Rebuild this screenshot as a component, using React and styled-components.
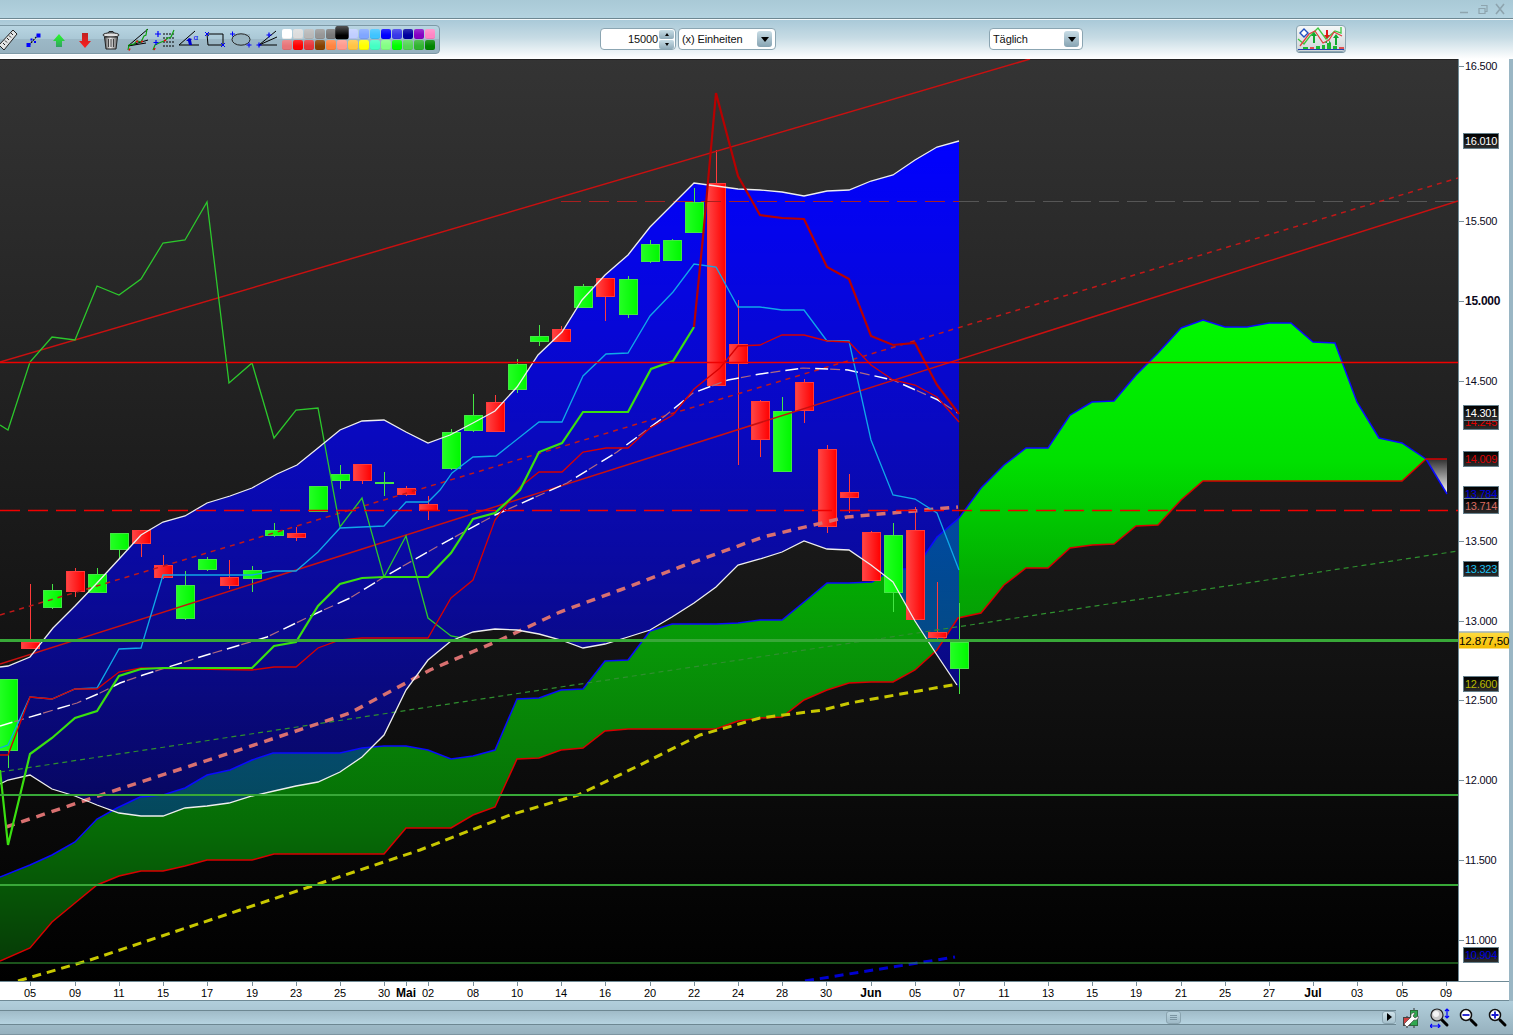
import React from "react";
import styled, { createGlobalStyle } from "styled-components";

const GlobalStyle = createGlobalStyle`
  html, body { margin: 0; padding: 0; background: #fff; }
  body { font-family: "Liberation Sans", Arial, sans-serif; overflow: hidden; }
`;

// chart coordinates are page pixels, the svg viewBox starts at the plot's top edge
const PLOT_TOP = 59;
const priceY = (p) => 301 + (15000 - p) * 0.15975;

const candles = [
  [8, 679, 750, 679, 768, "g"], [30, 642, 648, 584, 648, "r"], [52, 590, 607, 584, 609, "g"],
  [75, 571, 591, 568, 597, "r"], [97, 574, 592, 568, 593, "g"], [119, 533, 549, 533, 558, "g"],
  [141, 530, 543, 530, 557, "r"], [163, 565, 577, 555, 579, "r"], [185, 585, 618, 571, 620, "g"],
  [207, 559, 569, 557, 571, "g"], [229, 577, 585, 560, 589, "r"], [252, 570, 578, 566, 592, "g"],
  [274, 530, 535, 523, 537, "g"], [296, 533, 537, 527, 541, "r"], [318, 486, 511, 486, 511, "g"],
  [340, 474, 480, 465, 489, "g"], [362, 464, 480, 464, 484, "r"], [384, 482, 483, 472, 496, "g"],
  [406, 488, 494, 486, 496, "r"], [428, 504, 510, 496, 520, "r"], [451, 432, 468, 429, 470, "g"],
  [473, 415, 430, 394, 432, "g"], [495, 402, 431, 395, 431, "r"], [517, 364, 389, 359, 393, "g"],
  [539, 336, 341, 325, 346, "g"], [561, 329, 341, 326, 341, "r"], [583, 286, 307, 284, 308, "g"],
  [605, 278, 296, 278, 321, "r"], [628, 279, 314, 276, 318, "g"], [650, 244, 261, 240, 263, "g"],
  [672, 240, 260, 239, 260, "g"], [694, 202, 232, 188, 233, "g"], [716, 183, 385, 150, 385, "r"],
  [738, 344, 363, 300, 465, "r"], [760, 401, 439, 400, 457, "r"], [782, 411, 471, 397, 471, "g"],
  [804, 382, 410, 379, 423, "r"], [827, 449, 526, 445, 533, "r"], [849, 492, 497, 474, 513, "r"],
  [871, 532, 580, 531, 580, "r"], [893, 535, 592, 523, 612, "g"], [915, 530, 619, 507, 619, "r"],
  [937, 632, 637, 582, 642, "r"], [959, 642, 668, 603, 694, "g"],
];

const bandUpper = [
  [0, 667], [8, 666], [30, 657], [53, 628], [75, 606], [97, 583], [120, 558], [141, 535], [163, 522],
  [185, 516], [207, 503], [230, 496], [252, 488], [277, 474], [297, 465], [318, 448], [340, 430],
  [362, 421], [384, 420], [406, 432], [428, 443], [450, 435], [473, 423], [495, 411], [517, 387],
  [538, 355], [562, 332], [582, 300], [605, 275], [628, 255], [650, 227], [672, 205], [694, 183],
  [716, 186], [738, 189], [760, 190], [782, 192], [804, 196], [827, 191], [849, 190], [871, 181],
  [893, 175], [915, 160], [937, 147], [959, 141],
];
const bandLower = [
  [0, 784], [8, 780], [30, 775], [52, 789], [75, 796], [97, 805], [119, 813], [141, 816], [163, 816],
  [185, 808], [207, 806], [229, 803], [252, 796], [274, 791], [296, 786], [318, 782], [340, 772],
  [362, 757], [384, 735], [406, 690], [428, 660], [451, 641], [473, 632], [495, 629], [517, 630],
  [539, 634], [561, 640], [583, 648], [605, 644], [628, 637], [650, 630], [672, 617], [694, 603],
  [716, 587], [738, 565], [760, 559], [782, 552], [804, 541], [827, 549], [849, 550], [871, 565],
  [893, 582], [915, 621], [937, 655], [959, 688],
];
const cloudUpper = [
  [0, 877], [30, 865], [52, 855], [75, 842], [97, 819], [117, 808], [140, 797], [163, 795], [185, 788],
  [207, 775], [230, 770], [252, 760], [273, 753], [296, 753], [318, 753], [340, 753], [362, 748],
  [384, 746], [406, 746], [428, 750], [451, 759], [473, 756], [495, 750], [517, 699], [539, 698],
  [561, 690], [583, 689], [605, 661], [628, 660], [650, 631], [672, 624], [694, 624], [716, 624],
  [738, 623], [760, 620], [782, 620], [804, 602], [827, 583], [849, 583], [872, 582], [893, 569],
  [915, 569], [937, 537], [959, 518], [981, 488], [1004, 465], [1026, 448], [1048, 448], [1070, 415],
  [1092, 402], [1114, 401], [1136, 375], [1158, 353], [1181, 328], [1203, 320], [1225, 327], [1247, 327],
  [1269, 323], [1291, 323], [1313, 342], [1335, 343], [1357, 402], [1379, 438], [1402, 443], [1426, 459],
];
const cloudLower = [
  [0, 961], [30, 948], [52, 922], [75, 903], [97, 885], [119, 876], [141, 871], [163, 871], [185, 866],
  [207, 860], [229, 860], [252, 860], [274, 854], [296, 854], [318, 854], [340, 854], [362, 854],
  [384, 854], [406, 828], [428, 828], [451, 828], [473, 815], [495, 807], [517, 759], [539, 758],
  [561, 750], [583, 748], [605, 731], [628, 729], [650, 729], [672, 729], [694, 729], [716, 729],
  [738, 721], [760, 718], [782, 717], [804, 700], [827, 690], [849, 683], [871, 682], [893, 682],
  [915, 670], [937, 650], [958, 618], [981, 613], [1004, 585], [1026, 568], [1048, 568], [1070, 548],
  [1092, 545], [1114, 544], [1136, 526], [1158, 525], [1181, 500], [1203, 481], [1225, 481], [1402, 481],
  [1426, 459],
];
const lagging = [
  [0, 425], [8, 430], [30, 362], [52, 337], [75, 340], [97, 286], [119, 295], [141, 279], [163, 243],
  [185, 240], [207, 202], [229, 383], [252, 363], [274, 438], [296, 410], [318, 408], [340, 527],
  [362, 498], [384, 577], [406, 536], [428, 618], [451, 636], [473, 640],
];
const thickGreen = [
  [0, 770], [8, 845], [30, 754], [52, 738], [75, 718], [97, 711], [119, 676], [141, 669], [163, 668],
  [252, 668], [274, 646], [296, 642], [318, 606], [340, 584], [362, 578], [384, 577], [428, 577],
  [451, 553], [473, 519], [495, 513], [520, 490], [539, 452], [562, 443], [583, 412], [628, 412],
  [651, 369], [673, 361], [694, 327],
];
const thickRed = [
  [694, 327], [703, 237], [716, 93], [738, 176], [760, 215], [782, 218], [804, 219], [827, 267],
  [849, 279], [871, 336], [893, 345], [915, 343], [937, 385], [959, 414],
];
const thinRed = [
  [0, 755], [8, 755], [30, 697], [52, 699], [75, 689], [97, 689], [119, 672], [141, 668], [252, 670],
  [274, 667], [296, 667], [318, 648], [340, 640], [362, 638], [428, 638], [451, 598], [473, 580],
  [495, 520], [520, 487], [539, 472], [562, 472], [583, 452], [606, 448], [628, 448], [650, 428],
  [673, 415], [694, 389], [720, 368], [738, 346], [760, 345], [782, 335], [804, 335], [827, 341],
  [849, 342], [871, 365], [893, 380], [915, 385], [937, 397], [959, 422],
];
const cyan = [
  [0, 748], [8, 745], [30, 697], [52, 699], [75, 689], [97, 688], [119, 649], [141, 648], [163, 575],
  [252, 575], [274, 571], [296, 571], [318, 552], [340, 528], [362, 527], [384, 526], [406, 502],
  [428, 502], [440, 490], [452, 473], [473, 457], [496, 456], [539, 422], [562, 422], [583, 376],
  [606, 354], [628, 353], [650, 316], [673, 292], [694, 264], [716, 267], [738, 307], [760, 307],
  [782, 310], [804, 310], [827, 341], [849, 341], [871, 440], [893, 495], [915, 499], [937, 513],
  [959, 570],
];
const whiteDash = [
  [0, 726], [20, 720], [77, 703], [100, 693], [120, 683], [143, 675], [200, 657], [267, 637], [317, 613],
  [350, 598], [384, 577], [440, 545], [495, 515], [567, 483], [617, 452], [660, 420], [693, 393],
  [728, 380], [760, 374], [803, 368], [848, 370], [893, 380], [938, 400], [958, 413],
];
const pinkDash = [
  [6, 827], [110, 792], [233, 752], [350, 713], [430, 670], [500, 640], [560, 612], [620, 590],
  [680, 567], [763, 537], [847, 517], [958, 507],
];
const yellowDash = [
  [18, 981], [90, 960], [330, 880], [420, 850], [510, 815], [578, 795], [640, 765], [700, 735],
  [760, 718], [823, 710], [850, 703], [958, 684],
];

const pts = (list) => list.map((p) => p.join(",")).join(" ");

const yLabels = [
  { y: 66, t: "16.500" }, { y: priceY(15500), t: "15.500" }, { y: priceY(15000), t: "15.000", bold: true },
  { y: priceY(14500), t: "14.500" }, { y: priceY(13500), t: "13.500" }, { y: priceY(13000), t: "13.000" },
  { y: priceY(12500), t: "12.500" }, { y: priceY(12000), t: "12.000" }, { y: priceY(11500), t: "11.500" },
  { y: priceY(11000), t: "11.000" },
];
const valueTags = [
  { y: 141, t: "16.010", c: "#ffffff" }, { y: 422, t: "14.245", c: "#e00000" },
  { y: 413, t: "14.301", c: "#ffffff" }, { y: 459, t: "14.009", c: "#d80000" },
  { y: 494, t: "13.784", c: "#0000e0" }, { y: 506, t: "13.714", c: "#d86a60" },
  { y: 569, t: "13.323", c: "#1cc0f0" }, { y: 684, t: "12.600", c: "#b8b800" },
  { y: 955, t: "10.904", c: "#0000e0" },
];
const xLabels = [
  [30, "05"], [75, "09"], [119, "11"], [163, "15"], [207, "17"], [252, "19"], [296, "23"], [340, "25"],
  [384, "30"], [406, "Mai", 1], [428, "02"], [473, "08"], [517, "10"], [561, "14"], [605, "16"],
  [650, "20"], [694, "22"], [738, "24"], [782, "28"], [826, "30"], [871, "Jun", 1], [915, "05"],
  [959, "07"], [1004, "11"], [1048, "13"], [1092, "15"], [1136, "19"], [1181, "21"], [1225, "25"],
  [1269, "27"], [1313, "Jul", 1], [1357, "03"], [1402, "05"], [1446, "09"],
];
const swatches = [
  "#ffffff", "#dcdcdc", "#b8b8b8", "#969696", "#787878", "#000000", "#c0ceff", "#80a6ff", "#40c4ff",
  "#0000ff", "#3838e8", "#0000a0", "#8400c4", "#ff84c4",
  "#e87478", "#ff0000", "#e83438", "#844000", "#ff8440", "#ff9a8e", "#ffc444", "#ffff00", "#44ffc4",
  "#84ff84", "#00ff00", "#54d454", "#30b430", "#008400",
];

const Page = styled.div`
  width: 1513px;
  height: 1035px;
  display: flex;
  flex-direction: column;
  overflow: hidden;
`;

const TitleBar = styled.div`
  height: 18px;
  border-bottom: 1px solid #6d8792;
  background: linear-gradient(#a9c9d6, #b4d3e0);
  display: flex;
  justify-content: flex-end;
  align-items: center;
  padding-right: 5px;
`;

const Toolbar = styled.div`
  height: 39px;
  border-top: 1px solid #f4f9fb;
  background: linear-gradient(#a9c9d8 0%, #c6dbe4 45%, #ffffff 100%);
  display: flex;
  align-items: flex-start;
`;

const ToolPanel = styled.div`
  width: 448px;
  height: 29px;
  margin: 5px 0 0 -8px;
  padding-left: 1px;
  box-sizing: border-box;
  display: flex;
  align-items: center;
  border: 1px solid #7d99a6;
  border-radius: 4px;
  box-shadow: 0 1px 0 #ffffff;
  background: linear-gradient(#b8d5e2 0%, #a9c7d5 50%, #9cb8c6 50%, #96b1bf 100%);
  overflow: hidden;
  flex-shrink: 0;
`;

const ToolIcon = styled.svg`
  width: 26px;
  height: 26px;
  flex-shrink: 0;
  display: block;
`;

const Palette = styled.div`
  display: grid;
  grid-template-columns: repeat(14, 10px);
  grid-auto-rows: 10px;
  gap: 1px;
  margin-left: 2px;
`;

const Swatch = styled.span`
  border-radius: 2px;
  background-color: ${(p) => p.$color};
  background-image: linear-gradient(rgba(255, 255, 255, 0.18), rgba(255, 255, 255, 0) 60%);
  box-shadow: inset 0 -1px 0 rgba(0, 0, 0, 0.08);
  ${(p) => p.$selected && `
    transform: scale(1.35) translateY(-1px);
    border-radius: 2px;
    background-image: linear-gradient(#555, #000 70%);
    position: relative;
    z-index: 1;
  `}
`;

const FieldBox = styled.div`
  width: ${(p) => p.$width}px;
  height: 22px;
  margin: 8px 0 0 ${(p) => p.$left}px;
  box-sizing: border-box;
  flex-shrink: 0;
  display: flex;
  align-items: center;
  background: #fff;
  border: 1px solid #8ba5b2;
  border-radius: 4px;
  font-size: 11px;
  color: #111;
  letter-spacing: -0.1px;
`;

const FieldText = styled.span`
  flex: 1;
  padding: ${(p) => (p.$right ? "0 1px 0 3px" : "0 3px")};
  text-align: ${(p) => (p.$right ? "right" : "left")};
  white-space: nowrap;
`;

const ArrowButton = styled.span`
  width: 15px;
  height: 16px;
  margin-right: 3px;
  border-radius: 3px;
  background: linear-gradient(#c9dde6, #86a3b2);
  display: flex;
  align-items: center;
  justify-content: center;
  &::after {
    content: "";
    border-left: 4px solid transparent;
    border-right: 4px solid transparent;
    border-top: 5px solid #000;
  }
`;

const Spinner = styled.span`
  width: 15px;
  height: 19px;
  margin-right: 1px;
  display: flex;
  flex-direction: column;
  gap: 1px;
`;

const SpinPart = styled.span`
  flex: 1;
  border-radius: 2px;
  background: linear-gradient(#c9dde6, #8fabb9);
  display: flex;
  align-items: center;
  justify-content: center;
  &::after {
    content: "";
    border-left: 2.5px solid transparent;
    border-right: 2.5px solid transparent;
    ${(p) => (p.$up ? "border-bottom: 3px solid #000;" : "border-top: 3px solid #000;")}
  }
`;

const ChartButton = styled.div`
  width: 50px;
  height: 27px;
  margin: 5px 0 0 213px;
  box-sizing: border-box;
  flex-shrink: 0;
  border: 1px solid #8ba5b2;
  border-radius: 4px;
  background: linear-gradient(#f4f7f8, #d0d6d8);
  box-shadow: 0 1px 0 #74909d;
  overflow: hidden;
`;

const ChartRow = styled.div`
  height: 922px;
  display: flex;
`;

const Plot = styled.div`
  width: 1458px;
  height: 922px;
  flex-shrink: 0;
  background: linear-gradient(#343434, #000000);
  box-shadow: inset 0 1px 0 #222;
`;

const PlotSvg = styled.svg`
  display: block;
`;

const YAxis = styled.div`
  position: relative;
  width: 50px;
  flex-shrink: 0;
  background: #fff;
  border-left: 1px solid #6f8a96;
`;

const EdgeStrip = styled.div`
  width: 4px;
  flex-shrink: 0;
  background: #9ab6c4;
`;

const YTick = styled.div`
  position: absolute;
  left: 0;
  width: 5px;
  height: 1px;
  background: #7a8f99;
`;

const YLabel = styled.span`
  position: absolute;
  left: 6px;
  transform: translateY(-50%);
  font-size: ${(p) => (p.$bold ? 12 : 11)}px;
  line-height: 13px;
  letter-spacing: -0.25px;
  color: #0c0820;
  font-weight: ${(p) => (p.$bold ? 700 : 400)};
  white-space: nowrap;
`;

const ValueTag = styled.span`
  position: absolute;
  left: 4px;
  width: 36px;
  height: 16px;
  box-sizing: border-box;
  transform: translateY(-50%);
  border: 1px solid #66808c;
  background: linear-gradient(#000, #2c2c2c);
  color: ${(p) => p.$color};
  font-size: 11px;
  line-height: 14px;
  letter-spacing: -0.25px;
  text-align: center;
  white-space: nowrap;
  overflow: hidden;
`;

const PriceTag = styled.span`
  position: absolute;
  left: 0;
  width: 50px;
  height: 16px;
  transform: translateY(-50%);
  background: linear-gradient(#ffdc40, #f4bc00);
  border-top: 1px solid #6f8a96;
  font-size: 11.5px;
  line-height: 16px;
  text-align: center;
  letter-spacing: -0.1px;
  color: #000;
  white-space: nowrap;
`;

const XRow = styled.div`
  height: 20px;
  display: flex;
`;

const XAxis = styled.div`
  position: relative;
  width: 1509px;
  flex-shrink: 0;
  box-sizing: border-box;
  background: #fff;
  border-top: 1px solid #6f8a96;
  border-bottom: 1px solid #6f8a96;
`;

const XTick = styled.div`
  position: absolute;
  top: 0;
  width: 1px;
  height: 4px;
  background: #7a8f99;
`;

const XLabel = styled.span`
  position: absolute;
  top: 4px;
  transform: translateX(-50%);
  font-size: ${(p) => (p.$bold ? 12 : 11)}px;
  font-weight: ${(p) => (p.$bold ? 700 : 400)};
  line-height: 14px;
  color: #000;
  white-space: nowrap;
`;

const BottomBar = styled.div`
  height: 34px;
  box-sizing: border-box;
  border-bottom: 1px solid #7d95a1;
  background: linear-gradient(#b2cfdc, #96b1be);
  display: flex;
  align-items: center;
`;

const ScrollTrack = styled.div`
  width: 1396px;
  height: 15px;
  margin-top: -1px;
  box-sizing: border-box;
  flex-shrink: 0;
  border-top: 1px solid #6d8792;
  border-bottom: 1px solid #6d8792;
  background: linear-gradient(#a0bbc8, #b6d3e0);
  display: flex;
  align-items: center;
  justify-content: flex-end;
`;

const ScrollThumb = styled.span`
  width: 15px;
  height: 13px;
  margin-right: 201px;
  box-sizing: border-box;
  border: 1px solid #8aa4b0;
  border-radius: 3px;
  background: linear-gradient(#b9d3de, #9fbac7);
  display: flex;
  flex-direction: column;
  align-items: center;
  justify-content: center;
  gap: 1px;
`;

const ThumbGrip = styled.i`
  width: 7px;
  height: 1px;
  background: #7b95a2;
`;

const ScrollButton = styled.span`
  width: 14px;
  height: 13px;
  box-sizing: border-box;
  border: 1px solid #8aa4b0;
  border-radius: 3px;
  background: linear-gradient(#cfe2ea, #a5c0cc);
  display: flex;
  align-items: center;
  justify-content: center;
  &::after {
    content: "";
    border-top: 4px solid transparent;
    border-bottom: 4px solid transparent;
    border-left: 5px solid #000;
  }
`;

const BottomIcons = styled.div`
  display: flex;
  align-items: center;
  margin-left: 5px;
  gap: 7px;
`;

const BottomIcon = styled.svg`
  width: 22px;
  height: 20px;
  flex-shrink: 0;
  display: block;
`;

function WindowControls() {
  return (
    <svg width="48" height="14" viewBox="0 0 48 14">
      <path d="M0 10.5h8" stroke="#8ea4ae" strokeWidth="1.5" />
      <path d="M21 3.5h6v6h-2M19 6.5h6v5h-6z" fill="none" stroke="#8ea4ae" strokeWidth="1.2" />
      <path d="M36 2l8 10M44 2l-8 10" stroke="#8ea4ae" strokeWidth="1.6" />
    </svg>
  );
}

function Candle({ x, top, bottom, high, low, kind }) {
  const stroke = kind === "g" ? "#44e644" : "#ff3a3a";
  const fill = kind === "g" ? "url(#candleGreen)" : "url(#candleRed)";
  return (
    <g>
      <line x1={x + 0.5} x2={x + 0.5} y1={high} y2={low} stroke={stroke} strokeWidth="1" />
      <rect x={x - 8.5} y={top + 0.5} width="18" height={Math.max(bottom - top, 1)} fill={fill} stroke={stroke} strokeWidth="1" />
    </g>
  );
}

function ToolIcons() {
  return (
    <>
      <ToolIcon viewBox="0 0 26 26">
        <path d="M19 3l4 4-13 16-5-5z" fill="#e2e4e4" stroke="#222" strokeWidth="1" />
        <path d="M17 6l2 2M15 8.500l2 2M13 11l2 2M11 13.500l2 2M9 16l2 2" stroke="#222" strokeWidth="1" />
      </ToolIcon>
      <ToolIcon viewBox="0 0 26 26">
        <path d="M9 18l9-10" stroke="#000" strokeWidth="1.2" strokeDasharray="2 1" />
        <path d="M6.500 16h4v4h-4zM16.500 6.500h4v4h-4zM10.500 11.500h2v2h-2zM14 14h2v2h-2z" fill="#0000ff" />
      </ToolIcon>
      <ToolIcon viewBox="0 0 26 26">
        <defs>
          <linearGradient id="arrowUp" x1="0" x2="0" y1="0" y2="1">
            <stop offset="0" stopColor="#28ff28" />
            <stop offset="1" stopColor="#30a060" />
          </linearGradient>
          <linearGradient id="arrowDown" x1="0" x2="0" y1="0" y2="1">
            <stop offset="0" stopColor="#c02020" />
            <stop offset="1" stopColor="#ff2020" />
          </linearGradient>
          <linearGradient id="canBody" x1="0" x2="1" y1="0" y2="0">
            <stop offset="0" stopColor="#555" />
            <stop offset="0.45" stopColor="#e8e8e8" />
            <stop offset="1" stopColor="#666" />
          </linearGradient>
        </defs>
        <path d="M13 7l6 7h-3v6h-6v-6H7z" fill="url(#arrowUp)" />
      </ToolIcon>
      <ToolIcon viewBox="0 0 26 26">
        <path d="M10 6h6v8h3l-6 7-6-7h3z" fill="url(#arrowDown)" />
      </ToolIcon>
      <ToolIcon viewBox="0 0 26 26">
        <ellipse cx="13" cy="8" rx="8" ry="2.200" fill="#e0e0e0" stroke="#222" />
        <path d="M10 6l1-1.500h4l1 1.500" fill="none" stroke="#222" />
        <path d="M6.500 10h13l-1.500 12H8z" fill="url(#canBody)" stroke="#222" />
        <path d="M10.500 12v8M13 12v8M15.500 12v8" stroke="#333" strokeWidth="0.9" />
      </ToolIcon>
      <ToolIcon viewBox="0 0 26 26">
        <path d="M4 19L24 2M4 19l20-6M4 19l18-3" stroke="#000" strokeWidth="1" fill="none" />
        <path d="M4 23l1-5 5-1 3-3 4 1 3-6 2-1 1-6" stroke="#10a010" strokeWidth="1.2" fill="none" />
        <path d="M5 23.500l1-2M12 15l2-1M17 15l2-1" stroke="#e01010" strokeWidth="1.6" />
      </ToolIcon>
      <ToolIcon viewBox="0 0 26 26">
        <path d="M13 7h12M13 11h12M13 15h12M13 19h12" stroke="#000" strokeWidth="1" strokeDasharray="2 1" />
        <path d="M3 23l2-5 4-2 5-2 4-3 3-1 3-7" stroke="#10a010" strokeWidth="1.2" fill="none" />
        <path d="M4 23l1-2M14 14l2-1" stroke="#e01010" strokeWidth="1.6" />
        <path d="M8 4v6M5 7h6M6 13v5M3.500 15.500h5" stroke="#0000ff" strokeWidth="1.2" />
      </ToolIcon>
      <ToolIcon viewBox="0 0 26 26">
        <path d="M3 18L19 4M3 18h20" stroke="#000" strokeWidth="1" fill="none" />
        <path d="M10 14l3-3 3 1-1 1 1 5h-3l-1-4z" fill="#0000d0" />
        <text x="17.500" y="13" fontSize="8" fill="#0000ff" fontFamily="Liberation Sans">α</text>
      </ToolIcon>
      <ToolIcon viewBox="0 0 26 26">
        <path d="M5 7h16v11H6z" fill="none" stroke="#000" strokeWidth="1" />
        <path d="M3 5l4 4M7 5L3 9M19 16l4 4M23 16l-4 4" stroke="#0000ff" strokeWidth="1" />
      </ToolIcon>
      <ToolIcon viewBox="0 0 26 26">
        <rect x="5" y="7" width="17" height="12" fill="#98b3bf" />
        <ellipse cx="13" cy="12.500" rx="9" ry="5.700" fill="none" stroke="#222" strokeWidth="1" />
        <path d="M4.500 4.500v5M2 7h5M21 15.500v5M18.500 18h5" stroke="#0000ff" strokeWidth="1" />
      </ToolIcon>
      <ToolIcon viewBox="0 0 26 26">
        <path d="M5 18L22 4M5 18l18-8M5 18h18" stroke="#000" strokeWidth="1" fill="none" />
        <path d="M5 15.500v5M2.500 18h5M15 5.500v5M12.500 8h5" stroke="#0000ff" strokeWidth="1.200" />
      </ToolIcon>
    </>
  );
}

function IndicatorGlyph() {
  return (
    <svg width="48" height="25" viewBox="0 0 48 25">
      <path d="M1 13l6 5 6-8 8-8 8 11 9-8 6 2v-6" fill="none" stroke="#3cc83c" strokeWidth="1.3" />
      <path d="M3 20L12 8l6-3 8 12 6-3 5-8 8 4" fill="none" stroke="#e04040" strokeWidth="1.3" />
      <path d="M3 7l4-4 4 4-4 4z" fill="#fff" stroke="#1f4fc0" strokeWidth="1.4" />
      <path d="M14 10h6l-3-4zM16 10h2v7h-2zM28 17h6l-3-4zM30 14h2v5h-2zM42 12h-6l3-4zM38 11h2v8h-2z" fill="#10a830" />
      <path d="M27 9h6l-3 4zM29 4h2v5h-2z" fill="#e01818" />
      <path d="M6 21h5v2H6zM13 21h4v2h-4zM19 20h4v3h-4zM25 19h3v4h-3zM30 17h4v6h-4zM36 20h4v3h-4z" fill="#18b830" />
      <path d="M42 21h5v2h-5zM13 21h4v2h-4z" fill="#e05050" />
      <path d="M1 23.500h46" stroke="#2040b0" strokeWidth="1" />
    </svg>
  );
}

function Magnifier({ children }) {
  return (
    <>
      <path d="M12 12l5 5" stroke="#000" strokeWidth="3" strokeLinecap="round" />
      <circle cx="7" cy="7" r="5.500" fill="#fff" stroke="#111" strokeWidth="1.500" />
      {children}
    </>
  );
}

function ChartPlot() {
  return (
    <PlotSvg width="1458" height="922" viewBox={`0 ${PLOT_TOP} 1458 922`}>
      <defs>
        <linearGradient id="bandFill" gradientUnits="userSpaceOnUse" x1="0" x2="0" y1="140" y2="860">
          <stop offset="0" stopColor="#0000ff" stopOpacity="1" />
          <stop offset="1" stopColor="#0000ff" stopOpacity="0.3" />
        </linearGradient>
        <linearGradient id="cloudFill" gradientUnits="userSpaceOnUse" x1="0" x2="0" y1="320" y2="960">
          <stop offset="0" stopColor="#00f800" />
          <stop offset="0.22" stopColor="#00e000" />
          <stop offset="0.41" stopColor="#02aa02" />
          <stop offset="0.5" stopColor="#089808" />
          <stop offset="0.8" stopColor="#066a06" />
          <stop offset="1" stopColor="#063c06" />
        </linearGradient>
        <linearGradient id="wedgeFill" gradientUnits="userSpaceOnUse" x1="0" x2="0" y1="459" y2="494">
          <stop offset="0" stopColor="#303030" />
          <stop offset="1" stopColor="#ffffff" />
        </linearGradient>
        <linearGradient id="candleRed" x1="0" x2="1" y1="0" y2="0">
          <stop offset="0" stopColor="#ff4646" />
          <stop offset="1" stopColor="#ff0000" />
        </linearGradient>
        <linearGradient id="candleGreen" x1="0" x2="1" y1="0" y2="0">
          <stop offset="0" stopColor="#24ff24" />
          <stop offset="1" stopColor="#00f800" />
        </linearGradient>
      </defs>

      <polygon points={pts([...cloudUpper, ...[...cloudLower].reverse()])} fill="url(#cloudFill)" />
      <polygon points="1426,459 1447,459 1447,494" fill="url(#wedgeFill)" />
      <polygon points={pts([...bandUpper, ...[...bandLower].reverse()])} fill="url(#bandFill)" />

      <polyline points={pts(cloudUpper)} fill="none" stroke="#0a0aff" strokeWidth="1.5" />
      <polyline points="1426,459 1447,494" fill="none" stroke="#0a0aff" strokeWidth="1.5" />
      <polyline points={pts(cloudLower)} fill="none" stroke="#d80000" strokeWidth="1.5" />
      <polyline points="1426,459 1447,459" fill="none" stroke="#d80000" strokeWidth="1.5" />

      {candles.map(([x, top, bottom, high, low, kind]) => (
        <Candle key={x} x={x} top={top} bottom={bottom} high={high} low={low} kind={kind} />
      ))}

      <line x1="561" y1="201.500" x2="959" y2="201.500" stroke="#a82020" strokeWidth="1" strokeDasharray="20 8" />
      <line x1="959" y1="201.500" x2="1458" y2="201.500" stroke="#565656" strokeWidth="1" strokeDasharray="20 8" />
      <line x1="0" y1="362" x2="1030" y2="59" stroke="#c81010" strokeWidth="1.5" />
      <line x1="0" y1="664" x2="1458" y2="201" stroke="#c81010" strokeWidth="1.5" />
      <line x1="0" y1="615" x2="1458" y2="178" stroke="#c01818" strokeWidth="1.5" strokeDasharray="5 5" />
      <line x1="0" y1="772" x2="1458" y2="551" stroke="#2f8f2f" strokeWidth="1.2" strokeDasharray="5 4" />

      <polyline points={pts(pinkDash)} fill="none" stroke="#d87070" strokeWidth="3.500" strokeDasharray="9 7" />
      <polyline points={pts(yellowDash)} fill="none" stroke="#c8c800" strokeWidth="3" strokeDasharray="9 6" />
      <polyline points="805,981 955,957" fill="none" stroke="#0000d0" strokeWidth="3" strokeDasharray="9 6" />

      <polyline points={pts(whiteDash)} fill="none" stroke="#ffffff" strokeWidth="1.500" strokeDasharray="13 17" />
      <polyline points={pts(whiteDash)} fill="none" stroke="#b06a80" strokeWidth="1.200" strokeDasharray="0 15 10 5" />

      <polyline points={pts(lagging)} fill="none" stroke="#2cc82c" strokeWidth="1.300" />
      <polyline points={pts(cyan)} fill="none" stroke="#10a8e8" strokeWidth="1.300" />
      <polyline points={pts(thinRed)} fill="none" stroke="#d80000" strokeWidth="1.300" />
      <polyline points={pts(bandUpper)} fill="none" stroke="#eeeeee" strokeWidth="1.300" />
      <polyline points={pts(bandLower.slice(0, -1).concat([[957, 685]]))} fill="none" stroke="#eeeeee" strokeWidth="1.300" />
      <polyline points={pts(thickGreen)} fill="none" stroke="#3ae010" strokeWidth="2.200" />
      <polyline points={pts(thickRed)} fill="none" stroke="#b80000" strokeWidth="2.200" />

      <line x1="0" y1="362.500" x2="1458" y2="362.500" stroke="#f00000" strokeWidth="1.500" />
      <line x1="0" y1="510.500" x2="1458" y2="510.500" stroke="#f00000" strokeWidth="1.500" strokeDasharray="20 8" />
      <line x1="0" y1="640.500" x2="1458" y2="640.500" stroke="#38a838" strokeWidth="3" />
      <line x1="0" y1="795" x2="1458" y2="795" stroke="#38a838" strokeWidth="2" />
      <line x1="0" y1="885" x2="1458" y2="885" stroke="#38a838" strokeWidth="2" />
      <line x1="0" y1="963" x2="1458" y2="963" stroke="#38a838" strokeWidth="1" />
    </PlotSvg>
  );
}

export default function App() {
  return (
    <Page>
      <GlobalStyle />
      <TitleBar>
        <WindowControls />
      </TitleBar>
      <Toolbar>
        <ToolPanel>
          <ToolIcons />
          <Palette>
            {swatches.map((color, i) => (
              <Swatch key={i} $color={color} $selected={i === 5} />
            ))}
          </Palette>
        </ToolPanel>
        <FieldBox $left={160} $width={76}>
          <FieldText $right>15000</FieldText>
          <Spinner>
            <SpinPart $up />
            <SpinPart />
          </Spinner>
        </FieldBox>
        <FieldBox $left={2} $width={98}>
          <FieldText>(x) Einheiten</FieldText>
          <ArrowButton />
        </FieldBox>
        <FieldBox $left={213} $width={94}>
          <FieldText>Täglich</FieldText>
          <ArrowButton />
        </FieldBox>
        <ChartButton>
          <IndicatorGlyph />
        </ChartButton>
      </Toolbar>

      <ChartRow>
        <Plot>
          <ChartPlot />
        </Plot>
        <YAxis>
          {yLabels.map((l) => (
            <React.Fragment key={l.t}>
              <YTick style={{ top: l.y - PLOT_TOP }} />
              <YLabel $bold={l.bold} style={{ top: l.y - PLOT_TOP }}>{l.t}</YLabel>
            </React.Fragment>
          ))}
          {valueTags.map((v) => (
            <ValueTag key={v.t} $color={v.c} style={{ top: v.y - PLOT_TOP }}>{v.t}</ValueTag>
          ))}
          <PriceTag style={{ top: 640 - PLOT_TOP }}>12.877,50</PriceTag>
        </YAxis>
        <EdgeStrip />
      </ChartRow>

      <XRow>
        <XAxis>
          {xLabels.map(([x, text, bold]) => (
            <React.Fragment key={x}>
              <XTick style={{ left: x }} />
              <XLabel $bold={bold} style={{ left: x }}>{text}</XLabel>
            </React.Fragment>
          ))}
        </XAxis>
        <EdgeStrip />
      </XRow>

      <BottomBar>
        <ScrollTrack>
          <ScrollThumb>
            <ThumbGrip />
            <ThumbGrip />
            <ThumbGrip />
          </ScrollThumb>
          <ScrollButton />
        </ScrollTrack>
        <BottomIcons>
          <BottomIcon viewBox="0 0 22 20">
            <path d="M6 8v12M13 0v20" stroke="#333" strokeWidth="1" />
            <rect x="2.500" y="9.500" width="7" height="8" fill="#d04040" stroke="#444" />
            <rect x="9.500" y="2.500" width="7" height="15" fill="#30a850" stroke="#2a6a3a" />
            <path d="M3 16l7-7c-1-3 2-5 4-4l-2 3 2 2 3-2c1 2-1 5-4 4l-7 7z" fill="#fff" stroke="#333" strokeWidth="0.6" />
          </BottomIcon>
          <BottomIcon viewBox="0 0 22 20">
            <path d="M11 11l6 6" stroke="#000" strokeWidth="3" strokeLinecap="round" />
            <circle cx="7" cy="7" r="6" fill="#c8c8c8" stroke="#222" strokeWidth="1.2" />
            <circle cx="6" cy="6" r="3" fill="#f4f4f4" />
            <path d="M17 1v9M15 3l2-2 2 2M15 8l2 2 2-2M0 18h10M2 16l-2 2 2 2M8 16l2 2-2 2" fill="none" stroke="#0000ff" strokeWidth="1.2" />
          </BottomIcon>
          <BottomIcon viewBox="0 0 22 20">
            <Magnifier>
              <path d="M3.500 7h7" stroke="#1818d0" strokeWidth="1.800" />
            </Magnifier>
          </BottomIcon>
          <BottomIcon viewBox="0 0 22 20">
            <Magnifier>
              <path d="M3.500 7h7M7 3.500v7" stroke="#1818d0" strokeWidth="1.800" />
            </Magnifier>
          </BottomIcon>
        </BottomIcons>
      </BottomBar>
    </Page>
  );
}
